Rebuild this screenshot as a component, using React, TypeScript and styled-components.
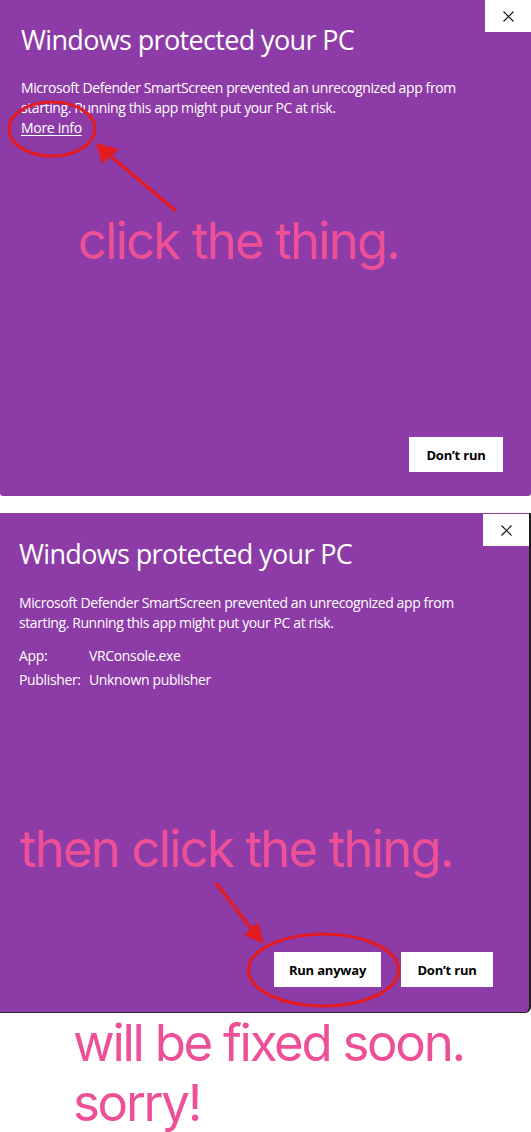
import React from "react";
import styled, { createGlobalStyle } from "styled-components";

const GlobalStyle = createGlobalStyle`
  html, body { margin: 0; padding: 0; background: #ffffff; }
  body { font-family: "Open Sans", "Noto Sans", sans-serif; }
`;

const PURPLE = "#8D3BA6";
const PINK = "#EE5097";
const RED = "#E31B23";

const Page = styled.main`
  width: 531px;
  display: flex;
  flex-direction: column;
`;

const Dialog = styled.section<{ $height: number; $edge?: boolean; $top?: number }>`
  position: relative;
  box-sizing: border-box;
  height: ${(p) => p.$height}px;
  margin-top: ${(p) => p.$top ?? 0}px;
  background: ${PURPLE};
  display: flex;
  flex-direction: column;
  border-right: ${(p) => (p.$edge ? "2px solid #1d1d1f" : "none")};
  border-bottom: ${(p) => (p.$edge ? "1px solid #2a2a2a" : "none")};
  border-radius: ${(p) => (p.$edge ? "0 0 6px 0" : "0 0 3px 3px")};
  color: #ffffff;
`;

const Header = styled.div`
  display: grid;
  grid-template-columns: 1fr 46px;
  align-items: start;
`;

const Main = styled.div<{ $left: number; $top: number }>`
  padding: ${(p) => p.$top}px 0 0 ${(p) => p.$left}px;
  display: flex;
  flex-direction: column;
`;

const CloseButton = styled.button<{ $offset?: number }>`
  width: 46px;
  height: 32px;
  margin-top: ${(p) => p.$offset ?? 0}px;
  background: #ffffff;
  border: none;
  padding: 0;
  display: flex;
  align-items: center;
  justify-content: center;
`;

const Title = styled.h1`
  margin: 0;
  font-family: "Open Sans", "Noto Sans", sans-serif;
  font-weight: 400;
  font-size: 27px;
  line-height: 36px;
  letter-spacing: -0.65px;
  white-space: nowrap;
`;

const Body = styled.p<{ $gap: number }>`
  margin: ${(p) => p.$gap}px 0 0;
  font-size: 14px;
  line-height: 20px;
  letter-spacing: -0.4px;
  white-space: nowrap;
`;

const MoreInfo = styled.a`
  display: block;
  width: max-content;
  font-size: 14px;
  line-height: 20px;
  letter-spacing: -0.3px;
  color: #ffffff;
  text-decoration: underline;
  text-underline-offset: 2px;
`;

const Details = styled.dl`
  margin: 11px 0 0;
  display: grid;
  grid-template-columns: 70px auto;
  font-size: 14px;
  line-height: 24px;
  letter-spacing: -0.35px;
  dt, dd { margin: 0; white-space: nowrap; }
`;

const Note = styled.p<{ $gap: number; $left: number }>`
  margin: ${(p) => p.$gap}px 0 0 ${(p) => p.$left}px;
  font-family: Inter, "Liberation Sans", sans-serif;
  font-size: 51px;
  line-height: 60px;
  letter-spacing: -1.9px;
  color: ${PINK};
  white-space: nowrap;
`;

const Spacer = styled.div`
  flex: 1;
`;

const Footer = styled.div<{ $right: number; $bottom: number }>`
  display: flex;
  justify-content: flex-end;
  gap: 20px;
  padding: 0 ${(p) => p.$right}px ${(p) => p.$bottom}px 0;
`;

const ActionButton = styled.button<{ $width: number }>`
  width: ${(p) => p.$width}px;
  height: 35px;
  background: #ffffff;
  border: none;
  padding: 0;
  font-family: "Open Sans", "Noto Sans", sans-serif;
  font-weight: 700;
  font-size: 13px;
  letter-spacing: -0.2px;
  color: #000000;
`;

const Overlay = styled.svg`
  position: absolute;
  left: 0;
  top: 0;
  width: 100%;
  height: 100%;
  pointer-events: none;
  overflow: visible;
`;

const Apology = styled.p`
  margin: 0;
  padding-left: 73px;
  font-family: Inter, "Liberation Sans", sans-serif;
  font-size: 51px;
  line-height: 60px;
  letter-spacing: -2.3px;
  color: ${PINK};
`;

const CloseIcon = () => (
  <svg width="11" height="11" viewBox="0 0 11 11">
    <path d="M0.5 0.5 L10.5 10.5 M10.5 0.5 L0.5 10.5" stroke="#111" strokeWidth="1.1" fill="none" />
  </svg>
);

export default function App() {
  return (
    <>
      <GlobalStyle />
      <Page>
        <Dialog $height={496}>
          <Header>
            <Main $left={21} $top={22}>
              <Title>Windows protected your PC</Title>
              <Body $gap={20}>
                Microsoft Defender SmartScreen prevented an unrecognized app from
                <br />
                starting. Running this app might put your PC at risk.
              </Body>
              <MoreInfo href="#">More info</MoreInfo>
              <Note $gap={73} $left={57}>click the thing.</Note>
            </Main>
            <CloseButton aria-label="Close">
              <CloseIcon />
            </CloseButton>
          </Header>
          <Spacer />
          <Footer $right={28} $bottom={24}>
            <ActionButton $width={94}>Don’t run</ActionButton>
          </Footer>
          <Overlay viewBox="0 0 531 496" preserveAspectRatio="none">
            <ellipse cx="52" cy="129" rx="43" ry="27" fill="none" stroke={RED} strokeWidth="3.2" />
            <line x1="176" y1="211" x2="108" y2="154" stroke={RED} strokeWidth="3.5" />
            <polygon points="96,143 102,164 119,149" fill={RED} />
          </Overlay>
        </Dialog>

        <Dialog $height={500} $edge $top={17}>
          <Header>
            <Main $left={19} $top={23}>
              <Title>Windows protected your PC</Title>
              <Body $gap={21}>
                Microsoft Defender SmartScreen prevented an unrecognized app from
                <br />
                starting. Running this app might put your PC at risk.
              </Body>
              <Details>
                <dt>App:</dt>
                <dd>VRConsole.exe</dd>
                <dt>Publisher:</dt>
                <dd>Unknown publisher</dd>
              </Details>
              <Note $gap={127} $left={1}>then click the thing.</Note>
            </Main>
            <CloseButton aria-label="Close" $offset={1}>
              <CloseIcon />
            </CloseButton>
          </Header>
          <Spacer />
          <Footer $right={36} $bottom={25}>
            <ActionButton $width={107}>Run anyway</ActionButton>
            <ActionButton $width={92}>Don’t run</ActionButton>
          </Footer>
          <Overlay viewBox="0 0 529 499" preserveAspectRatio="none">
            <ellipse cx="323.5" cy="457" rx="75" ry="36" fill="none" stroke={RED} strokeWidth="3.2" />
            <line x1="216" y1="370" x2="253" y2="418" stroke={RED} strokeWidth="3.5" />
            <polygon points="264,431 244,422 258,409" fill={RED} />
          </Overlay>
        </Dialog>

        <Apology>
          will be fixed soon.
          <br />
          sorry!
        </Apology>
      </Page>
    </>
  );
}
